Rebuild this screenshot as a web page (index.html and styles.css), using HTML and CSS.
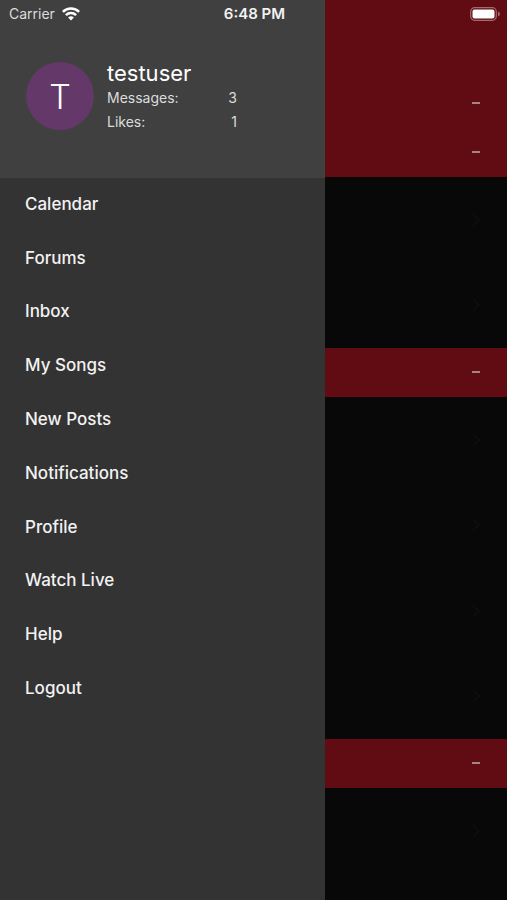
FILE: index.html
```
<!DOCTYPE html>
<html lang="en">
<head>
<meta charset="utf-8">
<meta name="viewport" content="width=device-width, initial-scale=1">
<title>Menu</title>
<link rel="stylesheet" href="styles.css">
</head>
<body>
<svg class="sprite" aria-hidden="true">
  <symbol id="chevron" viewBox="0 0 8 14"><path d="M1 1l6 6-6 6" fill="none" stroke="currentColor" stroke-width="1.5"/></symbol>
  <symbol id="minus" viewBox="0 0 8 2"><path d="M0 0h8v2H0z" fill="currentColor"/></symbol>
</svg>
<div class="status">
  <div class="carrier">
    <span>Carrier</span>
    <svg class="wifi" viewBox="0 0 18 14" aria-hidden="true">
      <g fill="none" stroke="currentColor" stroke-width="2.5">
        <path d="M.9 4.9a11.6 11.6 0 0 1 16.2 0"/>
        <path d="M3.9 8.2a7.3 7.3 0 0 1 10.2 0"/>
      </g>
      <path d="M9 13.6l-2.9-3a4.2 4.2 0 0 1 5.8 0z" fill="currentColor"/>
    </svg>
  </div>
  <time class="clock">6:48 PM</time>
  <svg class="battery" viewBox="0 0 30 14" aria-hidden="true">
    <rect x=".7" y=".7" width="25.6" height="12.6" rx="4" fill="none" stroke="#a36b70" stroke-width="1.2"/>
    <rect x="2.5" y="2.5" width="22" height="9" rx="2" fill="#fff"/>
    <path d="M28 4.5q2 .6 2 2.5t-2 2.5z" fill="#a36b70"/>
  </svg>
</div>
<div class="screen">
  <aside class="drawer">
    <header class="account">
      <div class="avatar">T</div>
      <div class="details">
        <h1>testuser</h1>
        <dl>
          <div><dt>Messages:</dt><dd>3</dd></div>
          <div><dt>Likes:</dt><dd>1</dd></div>
        </dl>
      </div>
    </header>
    <nav class="menu">
      <a href="#calendar">Calendar</a>
      <a href="#forums">Forums</a>
      <a href="#inbox">Inbox</a>
      <a href="#songs">My Songs</a>
      <a href="#posts">New Posts</a>
      <a href="#notifications">Notifications</a>
      <a href="#profile">Profile</a>
      <a href="#live">Watch Live</a>
      <a href="#help">Help</a>
      <a href="#logout">Logout</a>
    </nav>
  </aside>
  <main class="forums">
    <div class="topbar"></div>
    <button class="section" aria-label="Collapse section"><svg><use href="#minus"/></svg></button>
    <button class="section" aria-label="Collapse section"><svg><use href="#minus"/></svg></button>
    <div class="threads two">
      <a href="#t1" aria-label="Open forum"><svg><use href="#chevron"/></svg></a>
      <a href="#t2" aria-label="Open forum"><svg><use href="#chevron"/></svg></a>
    </div>
    <button class="section" aria-label="Collapse section"><svg><use href="#minus"/></svg></button>
    <div class="threads four">
      <a href="#t3" aria-label="Open forum"><svg><use href="#chevron"/></svg></a>
      <a href="#t4" aria-label="Open forum"><svg><use href="#chevron"/></svg></a>
      <a href="#t5" aria-label="Open forum"><svg><use href="#chevron"/></svg></a>
      <a href="#t6" aria-label="Open forum"><svg><use href="#chevron"/></svg></a>
    </div>
    <button class="section" aria-label="Collapse section"><svg><use href="#minus"/></svg></button>
    <div class="threads one">
      <a href="#t7" aria-label="Open forum"><svg><use href="#chevron"/></svg></a>
    </div>
  </main>
</div>
</body>
</html>
```
FILE: styles.css
```
* { box-sizing: border-box; }

body {
  margin: 0;
  background: #080808;
  color: #f2f2f2;
  font-family: Inter, "Liberation Sans", sans-serif;
}

a { color: inherit; text-decoration: none; }

.sprite { display: none; }

.status {
  position: absolute;
  top: 0;
  left: 0;
  right: 0;
  display: grid;
  grid-template-columns: 1fr auto 1fr;
  align-items: center;
  height: 27px;
  padding: 0 7px 0 9px;
  font-size: 14px;
}

.carrier { display: flex; align-items: center; gap: 7px; color: #dcdcdc; }
.wifi { width: 18px; height: 14px; color: #fff; }
.clock { font-size: 15px; font-weight: 600; }
.battery { width: 30px; height: 14px; justify-self: end; }

.screen {
  display: grid;
  grid-template-columns: 641fr 359fr;
  min-height: 100vh;
}

.drawer { background: #333; }

.account {
  display: flex;
  gap: 13px;
  height: 178px;
  padding: 60px 26px 0;
  background: #404040;
}

.avatar {
  display: grid;
  place-items: center;
  width: 68px;
  height: 68px;
  margin-top: 2px;
  border-radius: 50%;
  background: #643868;
  color: #fff;
  font-size: 34px;
  font-weight: 300;
}

.details { width: 130px; }

h1 {
  margin: 0;
  font-size: 22px;
  font-weight: 400;
  line-height: 26px;
  color: #fff;
}

dl { margin: 0; font-size: 14px; line-height: 24px; color: #dcdcdc; }
dl div { display: flex; justify-content: space-between; }
dd { margin: 0; }

.menu {
  display: grid;
  grid-auto-rows: 1fr;
  min-height: 538px;
}

.menu a {
  display: flex;
  align-items: center;
  padding: 0 25px 2px;
  font-size: 17px;
  font-weight: 500;
}

.forums {
  display: flex;
  flex-direction: column;
  color: #0f0f0f;
}

.topbar { height: 79px; background: #610c12; }

.section {
  display: flex;
  align-items: center;
  justify-content: flex-end;
  height: 49px;
  padding: 0 27px 2px;
  border: 0;
  background: #610c12;
  color: #a58486;
}

.section svg { width: 8px; height: 2px; }

.threads { display: grid; grid-auto-rows: 1fr; }
.two { min-height: 171px; }
.four { min-height: 342px; }
.one { min-height: 86px; }

.threads a {
  display: flex;
  align-items: center;
  justify-content: flex-end;
  padding: 0 27px;
}

.threads svg { width: 8px; height: 14px; }
```
